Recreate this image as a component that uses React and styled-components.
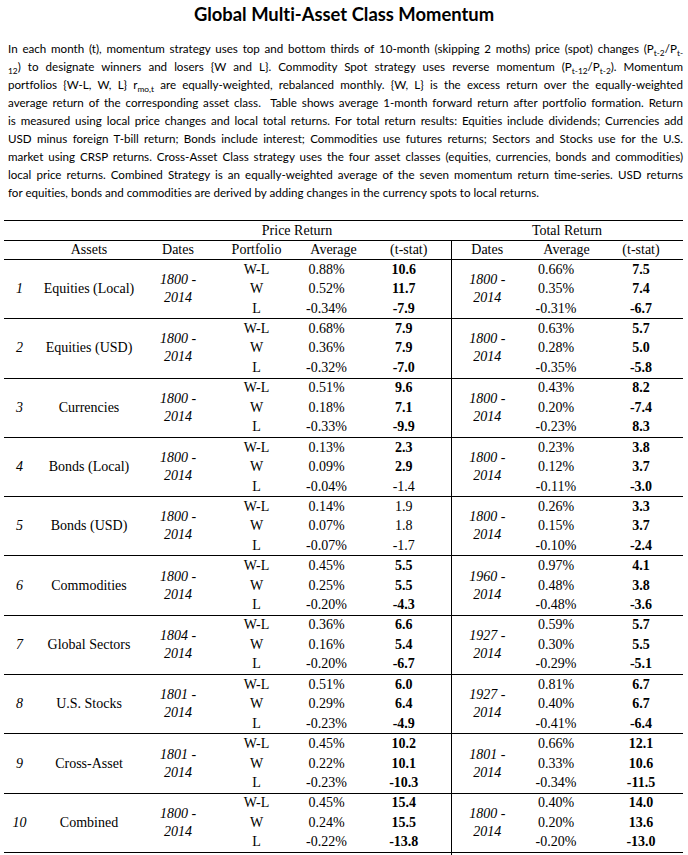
import React from "react";
import styled, { createGlobalStyle } from "styled-components";

const GlobalStyle = createGlobalStyle`
  body {
    margin: 0;
    background: #fff;
    color: #000;
  }
`;

const Page = styled.div`
  width: 688px;
  padding-top: 0;
`;

const Title = styled.h1`
  margin: 0;
  height: 28px;
  line-height: 28px;
  text-align: center;
  font-family: Lato, "Liberation Sans", sans-serif;
  font-weight: 700;
  font-size: 18.4px;
  font-variant-ligatures: none;
`;

const Note = styled.div`
  margin: 12px 5px 0 8px;
  font-family: Lato, "Liberation Sans", sans-serif;
  font-size: 11.6px;
  line-height: 18px;
  color: #000;
  font-variant-ligatures: none;
`;

// each line of the note is its own justified block, so the breaks match the reference
const Line = styled.span`
  display: block;
  text-align: justify;
  text-align-last: ${props => (props.last ? "left" : "justify")};
`;

const Sub = styled.sub`
  font-size: 0.72em;
  line-height: 0;
  vertical-align: -0.3em;
`;

const Table = styled.table`
  margin: 18px 0 0 4px;
  width: 679px;
  border-collapse: collapse;
  table-layout: fixed;
  font-family: "Liberation Serif", "Times New Roman", serif;
  font-size: 14px;
`;

const Row = styled.tr`
  height: ${props => props.h || 19.77}px;
  border-top: ${props => (props.ruled ? "1px solid #000" : "none")};
`;

const Cell = styled.td`
  padding: 0 ${props => props.pr || 0}px 0 0;
  text-align: center;
  vertical-align: middle;
  line-height: ${props => props.lh || 18}px;
  font-style: ${props => (props.italic ? "italic" : "normal")};
  font-weight: ${props => (props.bold ? 700 : 400)};
  border-left: ${props => (props.divider ? "1px solid #000" : "none")};
  white-space: nowrap;
`;

const Head = styled(Cell).attrs({ as: "th" })`
  font-weight: 400;
`;

const data = [
  [1, "Equities (Local)", "1800", [["0.88%", "10.6"], ["0.52%", "11.7"], ["-0.34%", "-7.9"]], "1800", [["0.66%", "7.5"], ["0.35%", "7.4"], ["-0.31%", "-6.7"]]],
  [2, "Equities (USD)", "1800", [["0.68%", "7.9"], ["0.36%", "7.9"], ["-0.32%", "-7.0"]], "1800", [["0.63%", "5.7"], ["0.28%", "5.0"], ["-0.35%", "-5.8"]]],
  [3, "Currencies", "1800", [["0.51%", "9.6"], ["0.18%", "7.1"], ["-0.33%", "-9.9"]], "1800", [["0.43%", "8.2"], ["0.20%", "-7.4"], ["-0.23%", "8.3"]]],
  [4, "Bonds (Local)", "1800", [["0.13%", "2.3"], ["0.09%", "2.9"], ["-0.04%", "-1.4"]], "1800", [["0.23%", "3.8"], ["0.12%", "3.7"], ["-0.11%", "-3.0"]]],
  [5, "Bonds (USD)", "1800", [["0.14%", "1.9"], ["0.07%", "1.8"], ["-0.07%", "-1.7"]], "1800", [["0.26%", "3.3"], ["0.15%", "3.7"], ["-0.10%", "-2.4"]]],
  [6, "Commodities", "1800", [["0.45%", "5.5"], ["0.25%", "5.5"], ["-0.20%", "-4.3"]], "1960", [["0.97%", "4.1"], ["0.48%", "3.8"], ["-0.48%", "-3.6"]]],
  [7, "Global Sectors", "1804", [["0.36%", "6.6"], ["0.16%", "5.4"], ["-0.20%", "-6.7"]], "1927", [["0.59%", "5.7"], ["0.30%", "5.5"], ["-0.29%", "-5.1"]]],
  [8, "U.S. Stocks", "1801", [["0.51%", "6.0"], ["0.29%", "6.4"], ["-0.23%", "-4.9"]], "1927", [["0.81%", "6.7"], ["0.40%", "6.7"], ["-0.41%", "-6.4"]]],
  [9, "Cross-Asset", "1801", [["0.45%", "10.2"], ["0.22%", "10.1"], ["-0.23%", "-10.3"]], "1801", [["0.66%", "12.1"], ["0.33%", "10.6"], ["-0.34%", "-11.5"]]],
  [10, "Combined", "1800", [["0.45%", "15.4"], ["0.24%", "15.5"], ["-0.22%", "-13.8"]], "1800", [["0.40%", "14.0"], ["0.20%", "13.6"], ["-0.20%", "-13.0"]]],
];

const portfolios = ["W-L", "W", "L"];

// t-stats under 2 in absolute value are printed plain
const strong = t => Math.abs(parseFloat(t)) >= 2;

const Dates = ({ from }) => (
  <>
    {from} -<br />2014
  </>
);

const App = () => {
  return (
    <Page>
      <GlobalStyle />
      <Title>Global Multi-Asset Class Momentum</Title>

      <Note>
        <Line>In each month (t), momentum strategy uses top and bottom thirds of 10-month (skipping 2 moths) price (spot) changes (P<Sub>t-2</Sub>/P<Sub>t-</Sub></Line>
        <Line><Sub>12</Sub>) to designate winners and losers {"{W and L}"}. Commodity Spot strategy uses reverse momentum (P<Sub>t-12</Sub>/P<Sub>t-2</Sub>). Momentum</Line>
        <Line>portfolios {"{W-L, W, L}"} r<Sub>mo,t</Sub> are equally-weighted, rebalanced monthly. {"{W, L}"} is the excess return over the equally-weighted</Line>
        <Line>average return of the corresponding asset class.&nbsp; Table shows average 1-month forward return after portfolio formation. Return</Line>
        <Line>is measured using local price changes and local total returns. For total return results: Equities include dividends; Currencies add</Line>
        <Line>USD minus foreign T-bill return; Bonds include interest; Commodities use futures returns; Sectors and Stocks use for the U.S.</Line>
        <Line>market using CRSP returns. Cross-Asset Class strategy uses the four asset classes (equities, currencies, bonds and commodities)</Line>
        <Line>local price returns. Combined Strategy is an equally-weighted average of the seven momentum return time-series. USD returns</Line>
        <Line last>for equities, bonds and commodities are derived by adding changes in the currency spots to local returns.</Line>
      </Note>

      <Table>
        <colgroup>
          <col style={{ width: 31 }} />
          <col style={{ width: 108 }} />
          <col style={{ width: 70 }} />
          <col style={{ width: 87 }} />
          <col style={{ width: 67 }} />
          <col style={{ width: 84 }} />
          <col style={{ width: 72 }} />
          <col style={{ width: 87 }} />
          <col style={{ width: 73 }} />
        </colgroup>
        <thead>
          <Row ruled h={20}>
            <Head colSpan={2} />
            <Head colSpan={4}>Price Return</Head>
            <Head colSpan={3}>Total Return</Head>
          </Row>
          <Row ruled h={18}>
            <Head />
            <Head>Assets</Head>
            <Head>Dates</Head>
            <Head>Portfolio</Head>
            <Head>Average</Head>
            <Head>(t-stat)</Head>
            <Head divider>Dates</Head>
            <Head>Average</Head>
            <Head pr={11}>(t-stat)</Head>
          </Row>
        </thead>
        <tbody>
          {data.map(([n, asset, from, price, fromTotal, total]) =>
            portfolios.map((p, i) => (
              <Row key={n + p} ruled={i === 0}>
                {i === 0 && (
                  <>
                    <Cell rowSpan={3} italic>{n}</Cell>
                    <Cell rowSpan={3}>{asset}</Cell>
                    <Cell rowSpan={3} italic><Dates from={from} /></Cell>
                  </>
                )}
                <Cell>{p}</Cell>
                <Cell pr={14}>{price[i][0]}</Cell>
                <Cell pr={10} bold={strong(price[i][1])}>{price[i][1]}</Cell>
                {i === 0 && (
                  <Cell rowSpan={3} italic divider><Dates from={fromTotal} /></Cell>
                )}
                <Cell pr={21}>{total[i][0]}</Cell>
                <Cell pr={11} bold={strong(total[i][1])}>{total[i][1]}</Cell>
              </Row>
            ))
          )}
          {/* the screenshot cuts the table here; only the divider shows below */}
          <Row ruled h={8}>
            <Cell colSpan={6} />
            <Cell divider />
            <Cell colSpan={2} />
          </Row>
        </tbody>
      </Table>
    </Page>
  );
};

export default App;
